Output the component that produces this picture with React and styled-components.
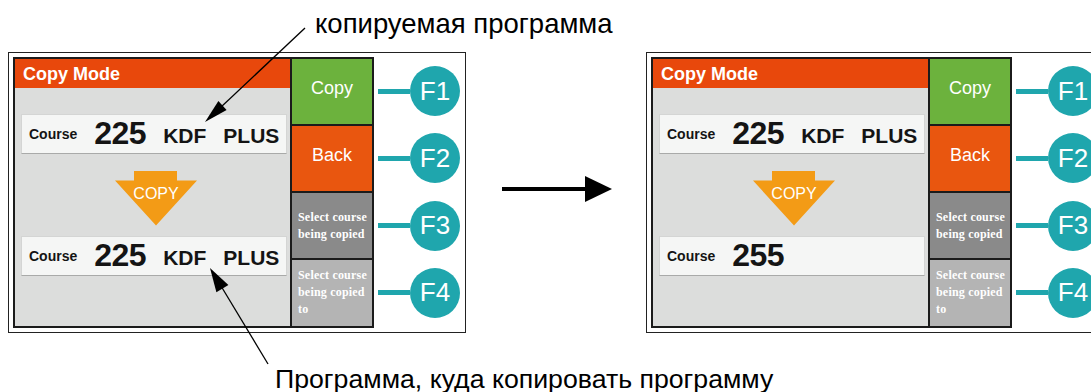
import React from 'react';
import styled, { createGlobalStyle } from 'styled-components';

const Global = createGlobalStyle`
  html, body {
    margin: 0;
    padding: 0;
    background: #fff;
  }
  body {
    width: 1091px;
    height: 392px;
    overflow: hidden;
    font-family: "Liberation Sans", Arial, sans-serif;
  }
`;

const Page = styled.div`
  position: relative;
  width: 1091px;
  height: 392px;
  overflow: hidden;
  padding-top: 10px;
  box-sizing: border-box;
`;

const Caption = styled.div`
  margin-left: ${(p) => p.$indent}px;
  font-size: ${(p) => p.$size}px;
  line-height: 1;
  color: #000;
  white-space: nowrap;
`;

const Stage = styled.div`
  display: flex;
  align-items: flex-start;
  margin: 14px 0 33px 8px;
`;

const Frame = styled.div`
  flex: none;
  display: flex;
  width: 458px;
  height: 281px;
  box-sizing: border-box;
  padding: 4px 0 0 4px;
  border: 1px solid #222;
  background: #fff;
`;

const Screen = styled.div`
  display: flex;
  gap: 2px;
  width: 361px;
  height: 271px;
  box-sizing: border-box;
  border: 2px solid #1b1b1b;
  background: #1b1b1b;
`;

const Main = styled.div`
  display: flex;
  flex-direction: column;
  width: 275px;
  background: #dcdddc;
`;

const Header = styled.div`
  height: 29px;
  padding-left: 8px;
  background: #e8480c;
  color: #fff;
  font-size: 18px;
  font-weight: bold;
  line-height: 30px;
`;

const CourseRow = styled.div`
  display: flex;
  align-items: center;
  gap: 17px;
  height: 40px;
  box-sizing: border-box;
  margin: ${(p) => p.$top}px 3px 0 6px;
  padding-left: 7px;
  background: #f5f6f5;
  border: 1px solid #d4d5d4;
  border-bottom-color: #a9aaa9;
  color: #141414;
  font-weight: bold;
  white-space: nowrap;
`;

const Label = styled.span`
  font-size: 14px;
`;

const Number = styled.span`
  font-size: 32px;
  letter-spacing: -0.5px;
`;

const Suffix = styled.span`
  font-size: 21px;
  margin-top: 4px;
`;

const CopyArrow = styled.div`
  align-self: flex-start;
  width: 82px;
  height: 55px;
  box-sizing: border-box;
  margin: 17px 0 0 100px;
  padding-top: 15px;
  background: #f39b16;
  clip-path: polygon(19px 0, 62px 0, 62px 10px, 82px 10px, 41px 55px, 0 10px, 19px 10px);
  color: #fff;
  font-size: 16px;
  line-height: 16px;
  text-align: center;
`;

const Buttons = styled.div`
  display: grid;
  grid-template-rows: repeat(4, 1fr);
  gap: 2px;
  width: 80px;
`;

const SoftKey = styled.div`
  box-sizing: border-box;
  min-height: 0;
  background: ${(p) => p.$bg};
  color: #fff;
  ${(p) =>
    p.$small
      ? `
    display: flex;
    align-items: center;
    padding: 0 4px 0 6px;
    font-family: "Liberation Serif", "Times New Roman", serif;
    font-size: 12px;
    font-weight: bold;
    line-height: 17px;
    letter-spacing: 0.2px;
  `
      : `
    padding-top: 18px;
    font-size: 18px;
    line-height: 22px;
    text-align: center;
  `}
`;

const Keys = styled.div`
  display: grid;
  grid-template-rows: repeat(4, 1fr);
  gap: 2px;
  height: 271px;
  box-sizing: border-box;
  padding: 2px 0;
  margin-left: 4px;
`;

const KeyRow = styled.div`
  display: flex;
  align-items: center;
`;

const Lead = styled.div`
  width: 32px;
  height: 5px;
  background: #1fa6ad;
`;

const Knob = styled.div`
  display: flex;
  align-items: center;
  justify-content: center;
  width: 50px;
  height: 50px;
  border-radius: 50%;
  background: #1fa6ad;
  color: #fff;
  font-size: 26px;
`;

const Gap = styled.div`
  flex: none;
  width: 180px;
  padding: 124px 0 0 36px;
  box-sizing: border-box;
`;

const Overlay = styled.svg`
  position: absolute;
  left: 0;
  top: 0;
  pointer-events: none;
`;

const keys = [
  { id: 'F1', label: 'Copy', bg: '#6cb23d' },
  { id: 'F2', label: 'Back', bg: '#e9560f' },
  { id: 'F3', label: 'Select course being copied', bg: '#8a8a8a', small: true },
  { id: 'F4', label: 'Select course being copied to', bg: '#b4b4b4', small: true },
];

const Course = ({ top, number, suffix }) => (
  <CourseRow $top={top}>
    <Label>Course</Label>
    <Number>{number}</Number>
    {suffix && suffix.map((s) => <Suffix key={s}>{s}</Suffix>)}
  </CourseRow>
);

const Panel = ({ target }) => (
  <Frame>
    <Screen>
      <Main>
        <Header>Copy Mode</Header>
        <Course top={26} number="225" suffix={['KDF', 'PLUS']} />
        <CopyArrow>COPY</CopyArrow>
        <Course top={10} number={target.number} suffix={target.suffix} />
      </Main>
      <Buttons>
        {keys.map((k) => (
          <SoftKey key={k.id} $bg={k.bg} $small={k.small}>
            <span>{k.label}</span>
          </SoftKey>
        ))}
      </Buttons>
    </Screen>
    <Keys>
      {keys.map((k) => (
        <KeyRow key={k.id}>
          <Lead />
          <Knob>{k.id}</Knob>
        </KeyRow>
      ))}
    </Keys>
  </Frame>
);

const App = () => (
  <Page>
    <Global />
    <Caption $indent={315} $size={27.5}>копируемая программа</Caption>
    <Stage>
      <Panel target={{ number: '225', suffix: ['KDF', 'PLUS'] }} />
      <Gap>
        <svg width="110" height="26" viewBox="0 0 110 26">
          <rect x="0" y="11" width="86" height="4" fill="#000" />
          <polygon points="83,0 110,13 83,26" fill="#000" />
        </svg>
      </Gap>
      <Panel target={{ number: '255' }} />
    </Stage>
    <Caption $indent={275} $size={26.7}>Программа, куда копировать программу</Caption>
    <Overlay width="1091" height="392" viewBox="0 0 1091 392">
      <line x1="305" y1="28" x2="220" y2="108" stroke="#000" strokeWidth="1.3" />
      <polygon points="205,122 226.6,109.9 218.4,101.1" fill="#000" />
      <line x1="268" y1="364" x2="221" y2="286" stroke="#000" strokeWidth="1.3" />
      <polygon points="210,268 228.4,285 216.4,292.2" fill="#000" />
    </Overlay>
  </Page>
);

export default App;
